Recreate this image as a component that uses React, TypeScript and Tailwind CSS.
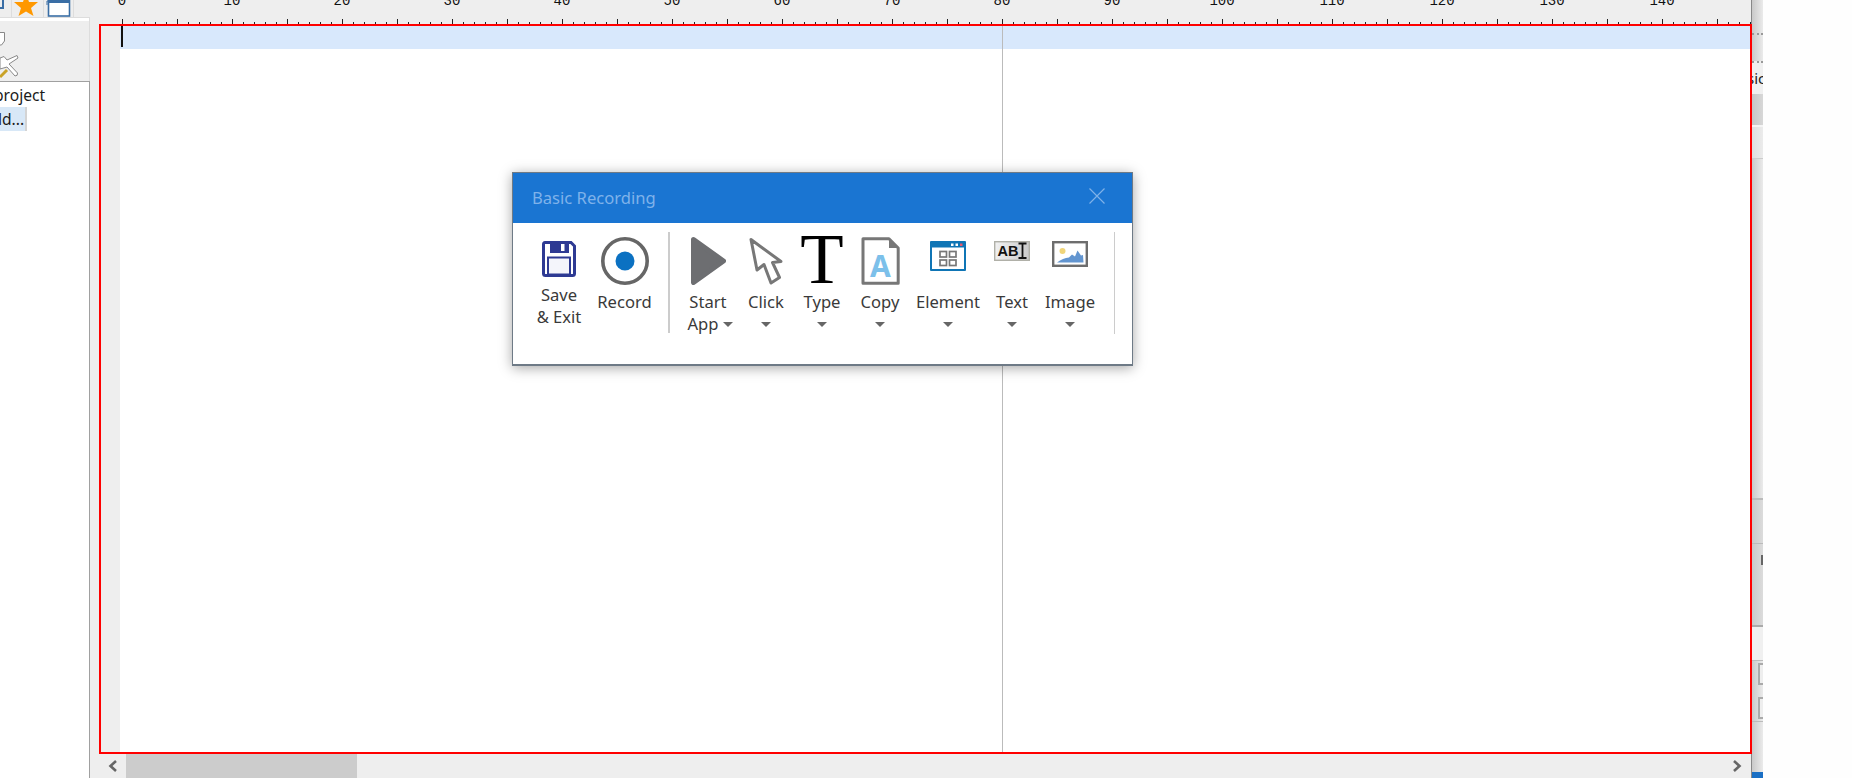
import type { ReactNode } from "react";

const rulerLabels = [0, 10, 20, 30, 40, 50, 60, 70, 80, 90, 100, 110, 120, 130, 140];

function Caret() {
  return <div className="w-0 h-0 border-x-[5px] border-t-[5px] border-x-transparent border-t-[#666]" />;
}

function ToolButton({ className, icon, label, second }: { className: string; icon: ReactNode; label: string; second?: ReactNode }) {
  return (
    <div className={`flex flex-col items-center shrink-0 ${className}`}>
      <div className="h-[59px] flex justify-center">{icon}</div>
      <div className="h-[22px] leading-[22px] whitespace-nowrap">{label}</div>
      <div className="h-[22px] leading-[22px] whitespace-nowrap flex items-center justify-center">
        {second ?? <Caret />}
      </div>
    </div>
  );
}

function SaveIcon() {
  return (
    <svg width="34" height="36" viewBox="0 0 34 36" className="mt-[9px]">
      <path d="M3 1.5H29L32.5 5V32.5Q32.5 34.5 30.5 34.5H3.5Q1.5 34.5 1.5 32.5V3.5Q1.5 1.5 3 1.5Z" fill="#fff" stroke="#2e3a93" strokeWidth="3" />
      <path d="M8 1H27V12H8Z" fill="#2e3a93" />
      <rect x="19" y="3" width="3.5" height="7" fill="#fff" />
      <rect x="6" y="16.5" width="22" height="17" fill="#f4f5fb" stroke="#2e3a93" strokeWidth="2" />
    </svg>
  );
}

function RecordIcon() {
  return (
    <svg width="48" height="48" viewBox="0 0 48 48" className="mt-[5px]">
      <circle cx="24" cy="24" r="22.2" fill="#fff" stroke="#666" strokeWidth="3.6" />
      <circle cx="24" cy="24" r="9.5" fill="#0b71c2" />
    </svg>
  );
}

function PlayIcon() {
  return (
    <svg width="35" height="48" viewBox="0 0 35 48" className="mt-[5px]">
      <path d="M2.5 2.5L32.5 24L2.5 45.5Z" fill="#6d6e71" stroke="#6d6e71" strokeWidth="5" strokeLinejoin="round" />
    </svg>
  );
}

function CursorIcon() {
  return (
    <svg width="34" height="48" viewBox="0 0 34 48" className="mt-[5px]">
      <path d="M2 2.5L8 33L15 27.5L22 46L30.5 40.5L23.5 25.5L32 24.5Z" fill="#fff" stroke="#777" strokeWidth="3" strokeLinejoin="round" />
    </svg>
  );
}

function CopyIcon() {
  return (
    <svg width="39" height="48" viewBox="0 0 39 48" className="mt-[5px]">
      <path d="M2 1.8H28L37.2 11V46.2H2Z" fill="#fff" stroke="#777" strokeWidth="3" strokeLinejoin="round" />
      <path d="M28 2L37 11H28Z" fill="#777" />
      <text x="19.5" y="40" textAnchor="middle" fontSize="30" fontWeight="700" fill="#7cc0ea" fontFamily="'Noto Sans', sans-serif">A</text>
    </svg>
  );
}

function ElementIcon() {
  return (
    <svg width="36" height="30" viewBox="0 0 36 30" className="mt-[9px]">
      <rect width="36" height="30" rx="1" fill="#0f75b5" />
      <rect x="2" y="6.5" width="32" height="21.5" fill="#fff" />
      <rect x="21" y="2.5" width="2.5" height="2.5" fill="#fff" />
      <rect x="25.5" y="2.5" width="2.5" height="2.5" fill="#fff" />
      <rect x="30" y="2.5" width="2.5" height="2.5" fill="#e8596c" />
      <g fill="none" stroke="#777" strokeWidth="1.7">
        <rect x="10" y="10.5" width="6.5" height="5.5" />
        <rect x="19.5" y="10.5" width="6.5" height="5.5" />
        <rect x="10" y="19" width="6.5" height="5.5" />
        <rect x="19.5" y="19" width="6.5" height="5.5" />
      </g>
    </svg>
  );
}

function TextIcon() {
  return (
    <svg width="36" height="20" viewBox="0 0 36 20" className="mt-[9px]">
      <defs>
        <linearGradient id="txtbg" x1="0" x2="1" y1="0" y2="0">
          <stop offset="0" stopColor="#f1f1f1" />
          <stop offset="1" stopColor="#cacaca" />
        </linearGradient>
      </defs>
      <rect x="0.7" y="0.7" width="34.6" height="18.6" fill="url(#txtbg)" stroke="#b0b0a8" strokeWidth="1.4" />
      <text x="3.5" y="15" fontSize="14.5" fontWeight="700" fill="#111" fontFamily="'Liberation Sans', sans-serif">AB</text>
      <path d="M24.5 2.5H28.5V17H24.5M32.5 2.5H28.5M32.5 17H28.5" fill="none" stroke="#111" strokeWidth="1.8" />
    </svg>
  );
}

function ImageIcon() {
  return (
    <svg width="36" height="26" viewBox="0 0 36 26" className="mt-[9px]">
      <rect x="1.2" y="1.2" width="33.6" height="23.6" fill="#fff" stroke="#6d6d6d" strokeWidth="2.4" />
      <circle cx="10.5" cy="10" r="3" fill="#f0d57a" />
      <path d="M5 21.5Q11 17 17 16.5L20 13.5L23 15.5L25.5 9.5L29 14.5L31 14L31.5 21.5Z" fill="#6295d0" />
    </svg>
  );
}

function StripPart({ className, children }: { className: string; children?: ReactNode }) {
  return <div className={`w-full shrink-0 overflow-hidden ${className}`}>{children}</div>;
}

export default function App() {
  return (
    <div className="w-[1852px] h-[778px] flex overflow-hidden bg-[#fefefe] font-['Noto_Sans',sans-serif] text-[#3a3a3a]">
      {/* left panel, mostly off screen */}
      <div className="w-[90px] shrink-0 h-full bg-[#eee] flex flex-col">
        <div className="h-[17px] flex overflow-hidden">
          <div className="w-[12px] border-r border-[#ddd] overflow-hidden">
            <div className="w-[4px] h-[9px] border-r-2 border-b-2 border-[#3a6ea5]" />
          </div>
          <div className="w-[32px] border-r border-[#ddd] pl-[2px] overflow-hidden">
            <svg width="24" height="17" viewBox="0 0 24 17">
              <path d="M12 -7L15 2L24 2L17 8L19.5 16L12 11.5L4.5 16L7 8L0 2L9 2Z" fill="#ff9800" />
            </svg>
          </div>
          <div className="w-[30px] border-r border-[#ddd] pl-[1px] overflow-hidden">
            <svg width="26" height="17" viewBox="0 0 26 17">
              <path d="M2 5V1H5" fill="none" stroke="#3a6ea5" />
              <rect x="3.5" y="-2" width="21" height="18" fill="#fff" stroke="#3a6ea5" strokeWidth="1.6" />
              <rect x="3.5" y="0" width="21" height="3" fill="#3a6ea5" />
            </svg>
          </div>
        </div>
        <div className="h-[64px] border-t border-r border-[#ddd] flex flex-col">
          <div className="h-[3px] bg-white" />
          <svg width="22" height="14" viewBox="0 0 22 14" className="mt-[11px]">
            <path d="M-2 0.5H4.5V9L1.5 13H-2" fill="#fff" stroke="#888" />
          </svg>
          <svg width="20" height="24" viewBox="0 0 20 24" className="mt-[9px]">
            <path d="M0 3L4 1.5L7 5L17 0.5L18 3L9 9L17.5 18Q18 21 15 21L7 12L0 14Z" fill="#fff" stroke="#888" />
            <path d="M0 22L7 15" stroke="#c9a227" strokeWidth="3" />
          </svg>
        </div>
        <div className="flex-1 bg-white border-t border-r border-[#a0a0a0] text-[15.6px] text-[#1b1b1b] pt-[1px] overflow-hidden">
          <div className="h-[24px] leading-[24px] -ml-[6px] whitespace-nowrap">project</div>
          <div className="w-[27px] h-[24px] leading-[24px] bg-[#d8e8f7] border-r-2 border-[#d4d4d4] whitespace-nowrap overflow-hidden">
            <span className="-ml-[2px] block">ld...</span>
          </div>
        </div>
      </div>

      {/* editor */}
      <div className="w-[1662px] shrink-0 h-full bg-[#eee] flex flex-col relative">
        <div className="h-[24px] shrink-0 relative overflow-hidden border-r border-[#888]">
          <div className="flex -ml-[23px] -mt-[6px] font-['Liberation_Mono',monospace] text-[14px] leading-[14px] text-[#111]">
            {rulerLabels.map((n) => (
              <div key={n} className="w-[110px] shrink-0 text-center">{n}</div>
            ))}
          </div>
          <svg width="1662" height="5" viewBox="0 0 1662 5" className="absolute left-0 bottom-0">
            {Array.from({ length: 150 }, (_, i) => (
              <rect key={i} x={32 + i * 11} y={i % 5 === 0 ? 0 : 3} width="1" height={i % 5 === 0 ? 5 : 2} fill="#222" />
            ))}
          </svg>
        </div>

        <div className="ml-[9px] h-[730px] shrink-0 border-2 border-[#ff0000] flex relative">
          <div className="w-[19px] shrink-0 bg-[#eee]" />
          <div className="flex-1 bg-white">
            <div className="h-[23px] bg-[#d8e8fc]" />
          </div>
          <div className="absolute left-[20px] top-0 w-[2px] h-[21px] bg-[#111]" />
          <div className="absolute left-[901px] top-0 bottom-0 w-[1px] bg-[#bbb]" />
        </div>

        <div className="h-[24px] shrink-0 flex items-center relative border-r border-[#888]">
          <svg width="10" height="12" viewBox="0 0 10 12" className="ml-[18px]">
            <path d="M8 1L2.5 6L8 11" fill="none" stroke="#666" strokeWidth="2.6" />
          </svg>
          <div className="ml-[8px] w-[231px] h-full bg-[#ccc]" />
          <svg width="10" height="12" viewBox="0 0 10 12" className="ml-[1375px]">
            <path d="M2 1L7.5 6L2 11" fill="none" stroke="#666" strokeWidth="2.6" />
          </svg>
        </div>

        {/* Basic Recording floating toolbar */}
        <div className="absolute left-[422px] top-[172px] w-[621px] h-[194px] bg-white border border-b-2 border-[#6e7a86] shadow-[0_2px_12px_rgba(0,0,0,0.35)] flex flex-col text-[16.6px]">
          <div className="h-[50px] shrink-0 bg-[#1a75d2] flex items-center justify-between pl-[19px] pr-[27px]">
            <span className="text-[#7fb2ea]">Basic Recording</span>
            <svg width="16" height="16" viewBox="0 0 16 16" className="-mt-[4px]">
              <path d="M0.5 0.5L15.5 15.5M15.5 0.5L0.5 15.5" stroke="#7fb2e8" strokeWidth="1.2" />
            </svg>
          </div>
          <div className="flex pl-[17px] pt-[9px]">
            <div className="w-[58px] flex flex-col items-center shrink-0">
              <div className="h-[52px]"><SaveIcon /></div>
              <div className="h-[22px] leading-[22px]">Save</div>
              <div className="h-[22px] leading-[22px] whitespace-nowrap">&amp; Exit</div>
            </div>
            <ToolButton className="w-[73px]" icon={<RecordIcon />} label="Record" second={<span />} />
            <div className="w-[2px] h-[101px] ml-[7px] bg-[#ccc] shrink-0" />
            <ToolButton
              className="w-[76px]"
              icon={<PlayIcon />}
              label="Start"
              second={
                <span className="flex items-center gap-[4px] pl-[4px]">
                  App <Caret />
                </span>
              }
            />
            <ToolButton className="w-[40px]" icon={<CursorIcon />} label="Click" />
            <ToolButton
              className="w-[72px]"
              icon={<div className="h-[55px] font-['Liberation_Serif',serif] text-[71px] leading-[55px] text-black">T</div>}
              label="Type"
            />
            <ToolButton className="w-[44px]" icon={<CopyIcon />} label="Copy" />
            <ToolButton className="w-[92px]" icon={<ElementIcon />} label="Element" />
            <ToolButton className="w-[36px]" icon={<TextIcon />} label="Text" />
            <ToolButton className="w-[80px]" icon={<ImageIcon />} label="Image" />
            <div className="w-[1px] h-[102px] ml-[4px] bg-[#ccc] shrink-0" />
          </div>
        </div>
      </div>

      {/* right panel edge */}
      <div className="w-[11px] shrink-0 h-full flex flex-col bg-gradient-to-r from-[#c9c9c9] to-[#ebebeb] text-[15px] text-[#222]">
        <StripPart className="h-[33px]" />
        <StripPart className="h-[28px] border-t-2 border-dotted border-[#999]" />
        <StripPart className="h-[33px] border-t-2 border-dotted border-[#999] bg-[#f0f0f0]">
          <div className="-ml-[5px] mt-[5px] leading-[20px]">sic</div>
        </StripPart>
        <StripPart className="h-[31px] bg-gradient-to-r from-[#c6c6c6] to-[#d8d8d8]" />
        <StripPart className="h-[33px] border-t-2 border-[#f5f5f5] bg-gradient-to-r from-[#dedede] to-[#ececec]" />
        <StripPart className="h-[340px] border-t border-[#ccc]" />
        <StripPart className="h-[45px] border-t-2 border-[#bbb] bg-gradient-to-r from-[#c9c9c9] to-[#dcdcdc]" />
        <StripPart className="h-[82px] border-t border-[#bbb] bg-gradient-to-r from-[#c9c9c9] to-[#dcdcdc]">
          <div className="ml-[9px] mt-[11px] w-[2px] h-[10px] border-l-2 border-b-2 border-[#666]" />
        </StripPart>
        <StripPart className="h-[35px] border-t-2 border-[#aaa] bg-[#f0f0f0]" />
        <StripPart className="h-[61px] border-t border-[#bbb] pl-[6px] pt-[2px] flex flex-col gap-[12px]">
          <div className="w-[20px] h-[22px] border-2 border-[#aaa] bg-[#eee] shrink-0" />
          <div className="w-[20px] h-[22px] border-2 border-[#aaa] bg-[#eee] shrink-0" />
        </StripPart>
        <StripPart className="h-[51px] border-t border-[#bbb]" />
        <StripPart className="flex-1 bg-[#1a6fc4]" />
      </div>

      <div className="flex-1" />
    </div>
  );
}
